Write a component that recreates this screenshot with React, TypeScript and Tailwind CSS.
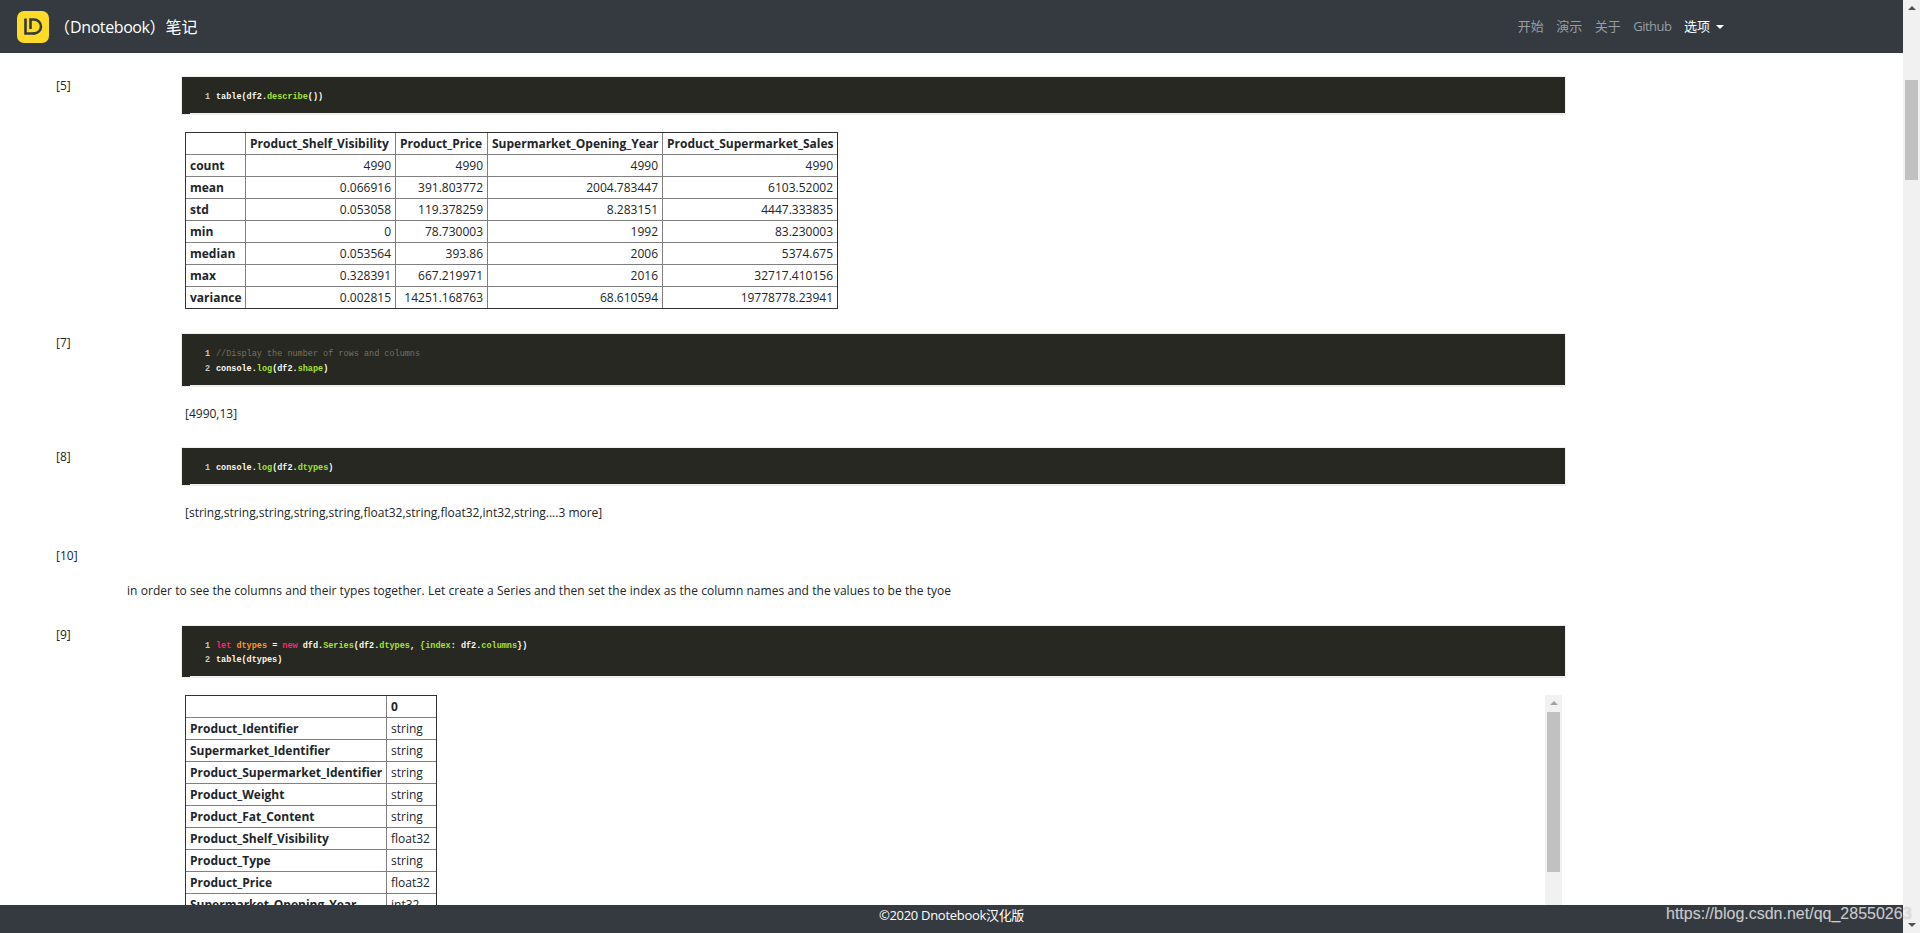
const font = "font-['Open_Sans','Noto_Sans_CJK_SC',sans-serif]";

function Logo() {
  return (
    <svg width="32" height="32" viewBox="0 0 32 32" className="shrink-0">
      <rect width="32" height="32" rx="7" fill="#fddb26" />
      <path d="M8.5 7.5V22.5H18" fill="none" stroke="#343a40" strokeWidth="2.6" />
      <path d="M13.5 18V8.5H17a7 7 0 0 1 0 14h-1" fill="none" stroke="#343a40" strokeWidth="2.6" />
    </svg>
  );
}

function G({ children }: { children: React.ReactNode }) {
  return <span className="text-[#a6e22e]">{children}</span>;
}
function R({ children }: { children: React.ReactNode }) {
  return <span className="text-[#f92672]">{children}</span>;
}

function Code({ lines }: { lines: React.ReactNode[] }) {
  return (
    <div className="relative border border-[#eeeeee] bg-[#272822] pl-[23px] pt-[13px] pb-[9.5px] font-['Liberation_Mono',monospace] text-[8.5px] font-bold leading-[14.5px] text-[#f8f8f2] whitespace-pre">
      {lines.map((l, i) => (
        <div key={i} className="flex">
          <span className="w-[11px] text-[#c8c8c0]">{i + 1}</span>
          <span>{l}</span>
        </div>
      ))}
      <div className="absolute left-[8px] right-0 bottom-0 h-px bg-[#eeeeee]" />
    </div>
  );
}

function Cell({ label, children, className }: { label: string; children: React.ReactNode; className?: string }) {
  return (
    <div className={"flex " + (className ?? "")}>
      <div className="w-[125px] shrink-0 pt-[1px] text-xs leading-[18px]">{label}</div>
      <div className="flex-1 min-w-0">{children}</div>
    </div>
  );
}

function Td({ children, th, left }: { children?: React.ReactNode; th?: boolean; left?: boolean }) {
  return (
    <td
      className={
        "h-[22px] border border-[#808080] px-[4px] pt-[1px] pb-0 whitespace-nowrap overflow-hidden " +
        (th ? "font-bold text-left" : left ? "text-left" : "text-right")
      }
    >
      {children}
    </td>
  );
}

const describeRows = [
  ["count", "4990", "4990", "4990", "4990"],
  ["mean", "0.066916", "391.803772", "2004.783447", "6103.52002"],
  ["std", "0.053058", "119.378259", "8.283151", "4447.333835"],
  ["min", "0", "78.730003", "1992", "83.230003"],
  ["median", "0.053564", "393.86", "2006", "5374.675"],
  ["max", "0.328391", "667.219971", "2016", "32717.410156"],
  ["variance", "0.002815", "14251.168763", "68.610594", "19778778.23941"],
];

const typeRows = [
  ["Product_Identifier", "string"],
  ["Supermarket_Identifier", "string"],
  ["Product_Supermarket_Identifier", "string"],
  ["Product_Weight", "string"],
  ["Product_Fat_Content", "string"],
  ["Product_Shelf_Visibility", "float32"],
  ["Product_Type", "string"],
  ["Product_Price", "float32"],
  ["Supermarket_Opening_Year", "int32"],
];

function DescribeTable() {
  return (
    <table className="table-fixed w-[652px] border-collapse outline outline-1 -outline-offset-1 outline-[#333333] text-xs leading-[18px]">
      <colgroup>
        <col className="w-[60px]" />
        <col className="w-[150px]" />
        <col className="w-[92px]" />
        <col className="w-[175px]" />
        <col className="w-[175px]" />
      </colgroup>
      <tbody>
        <tr>
          <Td th />
          <Td th>Product_Shelf_Visibility</Td>
          <Td th>Product_Price</Td>
          <Td th>Supermarket_Opening_Year</Td>
          <Td th>Product_Supermarket_Sales</Td>
        </tr>
        {describeRows.map((r) => (
          <tr key={r[0]}>
            <Td th>{r[0]}</Td>
            <Td>{r[1]}</Td>
            <Td>{r[2]}</Td>
            <Td>{r[3]}</Td>
            <Td>{r[4]}</Td>
          </tr>
        ))}
      </tbody>
    </table>
  );
}

function TypesTable() {
  return (
    <table className="table-fixed w-[251px] h-fit border-collapse outline outline-1 -outline-offset-1 outline-[#333333] text-xs leading-[18px]">
      <colgroup>
        <col className="w-[201px]" />
        <col className="w-[50px]" />
      </colgroup>
      <tbody>
        <tr>
          <Td th />
          <Td th>0</Td>
        </tr>
        {typeRows.map((r) => (
          <tr key={r[0]}>
            <Td th>{r[0]}</Td>
            <Td left>{r[1]}</Td>
          </tr>
        ))}
      </tbody>
    </table>
  );
}

function InnerScrollbar() {
  return (
    <div className="w-[17px] h-[260px] shrink-0 ml-auto flex flex-col items-center bg-[#f1f1f1]">
      <div className="mt-[6px] h-0 w-0 border-x-[4px] border-b-[4px] border-x-transparent border-b-[#a3a3a3]" />
      <div className="mt-[7px] h-[160px] w-[13px] bg-[#c1c1c1]" />
    </div>
  );
}

function PageScrollbar() {
  return (
    <div className="w-[17px] h-full shrink-0 flex flex-col items-center bg-[#f1f1f1]">
      <div className="mt-[6px] h-0 w-0 border-x-[4px] border-b-[4px] border-x-transparent border-b-[#505050]" />
      <div className="mt-[70px] h-[100px] w-[13px] bg-[#c1c1c1]" />
      <div className="mt-auto mb-[6px] h-0 w-0 border-x-[4px] border-t-[4px] border-x-transparent border-t-[#505050]" />
    </div>
  );
}

export default function App() {
  return (
    <div className={"relative flex h-[933px] w-full overflow-hidden bg-white text-[#212529] " + font}>
      <div className="flex min-w-0 flex-1 flex-col">
        <nav className="flex h-[53px] shrink-0 items-center bg-[#343a40] pl-[17px] pr-[179px]">
          <Logo />
          <span className="ml-[5px] text-base text-white">
            （<span className="tracking-[-0.4px]">Dnotebook</span>）笔记
          </span>
          <div className="ml-auto flex items-center gap-[12.5px] text-[13px] text-[#9a9da0]">
            <span>开始</span>
            <span>演示</span>
            <span>关于</span>
            <span className="tracking-[-0.5px]">Github</span>
            <span className="flex items-center gap-[6px] text-white">
              选项
              <span className="h-0 w-0 border-x-[4px] border-t-[4px] border-x-transparent border-t-white" />
            </span>
          </div>
        </nav>

        <main className="min-h-0 flex-1 overflow-hidden pl-[56px] pr-[337px] pt-[23px]">
          <Cell label="[5]">
            <Code lines={[<>table(df2.<G>describe</G>())</>]} />
            <div className="mt-[17px] pl-[4px]">
              <DescribeTable />
            </div>
          </Cell>

          <Cell label="[7]" className="mt-[24px]">
            <Code
              lines={[
                <span className="font-normal text-[#75715e]">//Display the number of rows and columns</span>,
                <>console.<G>log</G>(df2.<G>shape</G>)</>,
              ]}
            />
            <div className="mt-[18px] pl-[4px] text-xs leading-[18px]">[4990,13]</div>
          </Cell>

          <Cell label="[8]" className="mt-[24px]">
            <Code lines={[<>console.<G>log</G>(df2.<G>dtypes</G>)</>]} />
            <div className="mt-[18px] pl-[4px] text-xs leading-[18px]">
              [string,string,string,string,string,float32,string,float32,int32,string....3 more]
            </div>
          </Cell>

          <div className="mt-[25px] text-xs leading-[18px]">[10]</div>
          <div className="ml-[71px] mt-[17px] whitespace-nowrap text-xs leading-[18px] tracking-[0.05px]">
            in order to see the columns and their types together. Let create a Series and then set the index as the column names and the values to be the tyoe
          </div>

          <Cell label="[9]" className="mt-[25px]">
            <Code
              lines={[
                <>
                  <R>let</R> <span className="text-[#fd971f]">dtypes</span> = <R>new</R> dfd.<G>Series</G>(df2.<G>dtypes</G>, <G>{"{index"}</G>: df2.<G>columns</G>{"})"}
                </>,
                <>table(dtypes)</>,
              ]}
            />
            <div className="mr-[4px] mt-[17px] flex pl-[4px]">
              <TypesTable />
              <InnerScrollbar />
            </div>
          </Cell>
        </main>

        <footer className="h-[28px] shrink-0 bg-[#343a40] text-center text-[13px] leading-[20px] tracking-[-0.3px] text-white">
          ©2020 Dnotebook汉化版
        </footer>
      </div>
      <PageScrollbar />
      <div className="absolute bottom-[10px] left-[1666px] whitespace-nowrap font-['Liberation_Sans',sans-serif] text-base leading-[18px] text-white/70 [text-shadow:0_0_1px_rgba(110,110,110,0.7)]">
        https://blog.csdn.net/qq_28550263
      </div>
    </div>
  );
}
